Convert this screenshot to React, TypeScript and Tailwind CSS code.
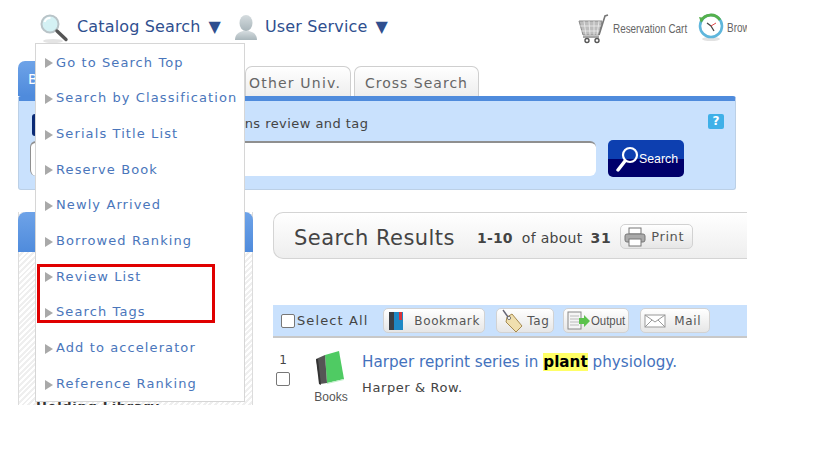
const FONT = "font-['DejaVu_Sans',sans-serif]";

function Lens({ size = 30 }: { size?: number }) {
  return (
    <svg width={size} height={size} viewBox="0 0 30 30" className="shrink-0">
      <ellipse cx="14" cy="28" rx="10" ry="2" fill="#e4e4e4" />
      <circle cx="11" cy="11" r="8.5" fill="#d4f1f4" stroke="#b9c4c8" strokeWidth="2" />
      <path d="M5.5 9a6 6 0 0 1 6-4" stroke="#fff" strokeWidth="2" fill="none" />
      <path d="M18 18l9 8.5" stroke="#555" strokeWidth="3.4" strokeLinecap="round" />
    </svg>
  );
}

function Person() {
  return (
    <svg width="24" height="26" viewBox="0 0 24 26" className="shrink-0 block">
      <defs>
        <linearGradient id="pg" x1="0" y1="0" x2="0" y2="1">
          <stop offset="0" stopColor="#d5dcdf" />
          <stop offset="1" stopColor="#a9b6bb" />
        </linearGradient>
      </defs>
      <ellipse cx="12" cy="8" rx="6.5" ry="8" fill="url(#pg)" />
      <path d="M1 25c0-6 4-8 8-9h6c4 1 8 3 8 9z" fill="url(#pg)" />
    </svg>
  );
}

function Cart() {
  return (
    <svg width="32" height="30" viewBox="0 0 32 30" className="shrink-0 block">
      <path d="M1 7h23l-3 14H5z" fill="#bdbdbd" stroke="#8a8a8a" />
      <path d="M6 7l2 14M11 7l1 14M16 7v14M21 7l-2 14M2 12h21M3 17h19" stroke="#eee" strokeWidth="0.8" />
      <path d="M21 21l6-19 3-1" stroke="#777" strokeWidth="1.6" fill="none" />
      <path d="M5 23h16" stroke="#888" strokeWidth="1.5" />
      <circle cx="9" cy="26.5" r="2" fill="#fff" stroke="#555" strokeWidth="1.4" />
      <circle cx="19" cy="26.5" r="2" fill="#fff" stroke="#555" strokeWidth="1.4" />
    </svg>
  );
}

function Clock() {
  return (
    <svg width="28" height="28" viewBox="0 0 28 28" className="shrink-0 block">
      <ellipse cx="14" cy="26" rx="9" ry="2" fill="#e2e2e2" />
      <circle cx="14" cy="13" r="11" fill="#fff" stroke="#5fb6dc" strokeWidth="2.6" />
      <path d="M4 8a11 11 0 0 1 19-1" stroke="#55b04c" strokeWidth="2.8" fill="none" />
      <path d="M2 4l5 1-3 5z" fill="#55b04c" />
      <path d="M14 13l-4-3M14 13l3 5" stroke="#444" strokeWidth="1.3" />
      <path d="M14 13l5-3" stroke="#d33" strokeWidth="0.9" />
    </svg>
  );
}

function Book({ w = 16, h = 20 }: { w?: number; h?: number }) {
  return (
    <svg width={w} height={h} viewBox="0 0 16 20" className="shrink-0">
      <rect x="1" y="1" width="5" height="18" fill="#3c3f44" />
      <rect x="6" y="1" width="9" height="18" fill="#1f88c4" />
      <rect x="11" y="1" width="3" height="8" fill="#d9333a" />
    </svg>
  );
}

function Btn({ children, className }: { children: React.ReactNode; className: string }) {
  return (
    <div className={`h-[25px] shrink-0 flex items-center rounded-[5px] border border-[#d2d2d2] bg-gradient-to-b from-white to-[#e6e6e6] text-[#555] text-[13px] tracking-[0.6px] ${className}`}>
      {children}
    </div>
  );
}

const menu = [
  "Go to Search Top",
  "Search by Classification",
  "Serials Title List",
  "Reserve Book",
  "Newly Arrived",
  "Borrowed Ranking",
  "Review List",
  "Search Tags",
  "Add to accelerator",
  "Reference Ranking",
];

export default function App() {
  return (
    <div className={`w-[819px] h-[460px] bg-white overflow-hidden ${FONT}`}>
      <div className="relative w-[747px] h-[405px] overflow-hidden">
        {/* Header */}
        <div className="h-[61px] w-[1000px] flex pl-[39px] pt-[13px]">
          <Lens />
          <span className="ml-[8px] mt-[3px] h-[22px] w-[144px] shrink-0 flex justify-between text-[16px] leading-[22px] tracking-[0.15px] text-[#2f4f8f] whitespace-nowrap"><span>Catalog Search</span><span>▼</span></span>
          <span className="ml-[13px] mt-[2px] shrink-0"><Person /></span>
          <span className="ml-[7px] mt-[3px] h-[22px] w-[123px] shrink-0 flex justify-between text-[16px] leading-[22px] tracking-[0.15px] text-[#2f4f8f] whitespace-nowrap"><span>User Service</span><span>▼</span></span>
          <span className="ml-[190px] mt-[1px] shrink-0"><Cart /></span>
          <span className="ml-[3px] mt-[8px] h-[16px] w-[73px] shrink-0 font-['Liberation_Sans',sans-serif] text-[13px] leading-[16px] text-[#666] scale-x-[0.76] origin-left whitespace-nowrap">Reservation Cart</span>
          <span className="ml-[11px] shrink-0"><Clock /></span>
          <span className="ml-[2px] mt-[7px] h-[16px] shrink-0 font-['Liberation_Sans',sans-serif] text-[13px] leading-[16px] text-[#666] scale-x-[0.77] origin-left whitespace-nowrap">Browsing History</span>
        </div>

        {/* Search panel */}
        <div className="ml-[18px] w-[718px] h-[129px] relative">
          <div className="flex h-[35px] items-end">
            <div className="w-[120px] h-[35px] rounded-t-[7px] bg-gradient-to-b from-[#6ea3e8] to-[#4f8bdc] pl-[10px] pt-[8px] text-white text-[14px]">Book</div>
            <div className="ml-[107px] w-[106px] h-[30px] rounded-t-[7px] border border-b-0 border-[#cfcfcf] bg-gradient-to-b from-white to-[#eeeeee] text-center pr-[6px] text-[14px] leading-[33px] tracking-[1.2px] text-[#666]">Other Univ.</div>
            <div className="ml-[3px] w-[125px] h-[30px] rounded-t-[7px] border border-b-0 border-[#cfcfcf] bg-gradient-to-b from-white to-[#eeeeee] text-center text-[14px] leading-[33px] tracking-[1px] text-[#666]">Cross Search</div>
          </div>
          <div className="h-[94px] rounded-[3px] border-t-[5px] border-t-[#4f8bdc] border-x border-b border-x-[#bcd0e6] border-b-[#bcd0e6] bg-[#c9e1fd] relative">
            <div className="flex items-start pl-[13px] pt-[13px]">
              <div className="w-[20px] h-[22px] bg-[#0b2a75] rounded-[3px]" />
              <span className="ml-[148px] mt-[1px] text-[13px] leading-[18px] tracking-[0.45px] text-[#444]">Contains review and tag</span>
              <span className="ml-auto mr-[11px] w-[16px] h-[15px] rounded-[2px] bg-[#3fb0e8] text-white text-[12px] font-bold leading-[15px] text-center">?</span>
            </div>
            <div className="flex items-start pl-[11px] pt-[5px]">
              <div className="w-[566px] h-[35px] rounded-[6px] bg-white border-t-2 border-t-[#8f8f8f] border-l border-l-[#8f8f8f]" />
              <div className="ml-[12px] -mt-[1px] w-[76px] h-[37px] rounded-[5px] bg-gradient-to-b from-[#0d3fb0] from-50% to-[#00006b] to-50% flex items-center pl-[7px] text-white">
                <svg width="24" height="26" viewBox="0 0 24 26" className="shrink-0">
                  <circle cx="15" cy="9" r="7" fill="none" stroke="#fff" strokeWidth="2.2" />
                  <path d="M10 15l-7 9" stroke="#fff" strokeWidth="3.4" strokeLinecap="round" />
                </svg>
                <span className="font-['Liberation_Sans',sans-serif] text-[13px] scale-x-[0.95] origin-left whitespace-nowrap">Search</span>
              </div>
            </div>
          </div>
        </div>

        {/* Body */}
        <div className="flex mt-[22px] pl-[18px]">
          <div className="w-[235px] h-[193px] shrink-0 relative border-x border-[#dcdcdc] bg-[repeating-linear-gradient(135deg,#ffffff,#ffffff_2px,#efefef_2px,#efefef_4px)]">
            <div className="h-[40px] rounded-t-[8px] -mx-px bg-gradient-to-b from-[#6ea3e8] to-[#4f8bdc]" />
            <div className="absolute left-[17px] top-[187px] text-[13px] font-bold tracking-[0.7px] text-[#333] leading-[16px] whitespace-nowrap">Holding Library</div>
          </div>

          <div className="ml-[20px] flex-1 min-w-0">
            <div className="h-[47px] w-[480px] rounded-l-[10px] border border-r-0 border-[#d4d4d4] bg-gradient-to-b from-white to-[#eeeeee] flex items-center pl-[20px] pt-[6px] whitespace-nowrap">
              <span className="text-[21px] tracking-[0.45px] text-[#444]">Search Results</span>
              <span className="ml-[22px] text-[14px] font-bold text-[#444] tracking-[0.2px]">1-10</span>
              <span className="ml-[9px] text-[14px] text-[#444] tracking-[0.3px]">of about</span>
              <span className="ml-[8px] text-[14px] font-bold text-[#444] tracking-[0.6px]">31</span>
              <Btn className="ml-[9px] w-[73px] pl-[3px] gap-[5px] -mt-[4px]">
                <svg width="22" height="20" viewBox="0 0 22 20" className="shrink-0">
                  <rect x="5" y="1" width="12" height="6" fill="#fff" stroke="#777" />
                  <rect x="1" y="7" width="20" height="8" rx="2" fill="#aaa" stroke="#777" />
                  <rect x="5" y="12" width="12" height="7" fill="#fff" stroke="#777" />
                </svg>
                Print
              </Btn>
            </div>

            <div className="mt-[46px] h-[33px] w-[474px] bg-[#c9e1fd] border-b-2 border-b-[#c8c8c8] flex items-center pl-[8px] whitespace-nowrap">
              <span className="w-[14px] h-[14px] border border-[#777] rounded-[2px] bg-white shrink-0" />
              <span className="ml-[2px] text-[13px] tracking-[1.1px] text-[#444]">Select All</span>
              <Btn className="ml-[15px] w-[102px] pl-[4px]">
                <Book />
                <span className="ml-[10px] text-[12px]">Bookmark</span>
              </Btn>
              <Btn className="ml-[11px] w-[58px] pl-[3px]">
                <svg width="24" height="24" viewBox="0 0 24 24" className="shrink-0">
                  <path d="M7 8l5-3 10 12-6 6L6 13z" fill="#f0dfae" stroke="#a58a4f" />
                  <circle cx="9" cy="9" r="1.6" fill="#fff" stroke="#777" />
                  <path d="M8 8L3 1" stroke="#667" strokeWidth="1.4" />
                </svg>
                <span className="ml-[3px] text-[12px]">Tag</span>
              </Btn>
              <Btn className="ml-[9px] w-[66px] pl-[3px]">
                <svg width="24" height="20" viewBox="0 0 24 20" className="shrink-0">
                  <rect x="1" y="1" width="13" height="17" fill="#f5f5f5" stroke="#888" />
                  <path d="M3 5h9M3 8h9M3 11h9M3 14h9" stroke="#bbb" />
                  <path d="M12 7h5V4l6 6-6 6v-3h-5z" fill="#5cc24d" />
                </svg>
                <span className="font-['Liberation_Sans',sans-serif] text-[12px] tracking-normal scale-x-[0.95] origin-left">Output</span>
              </Btn>
              <Btn className="ml-[11px] w-[70px] pl-[3px]">
                <svg width="22" height="14" viewBox="0 0 22 14" className="shrink-0">
                  <rect x="1" y="1" width="20" height="12" fill="#fff" stroke="#999" />
                  <path d="M1 1l10 7 10-7M1 13l7-7M21 13l-7-7" stroke="#999" fill="none" />
                </svg>
                <span className="ml-[8px] text-[12px]">Mail</span>
              </Btn>
            </div>

            <div className="flex mt-[14px] whitespace-nowrap">
              <div className="w-[18px] ml-[1px] flex flex-col items-center shrink-0">
                <span className="text-[12px] leading-[16px] text-[#444]">1</span>
                <span className="mt-[4px] w-[14px] h-[14px] border border-[#777] rounded-[2px]" />
              </div>
              <div className="w-[46px] ml-[16px] flex flex-col items-center shrink-0 -mt-[1px]">
                <svg width="30" height="34" viewBox="0 0 30 34" className="shrink-0 -ml-[2px]">
                  <path d="M10 4L24 0l5 28-17 4z" fill="#4fcb63" />
                  <path d="M1 8l9-4 2 28-7 1z" fill="#555" />
                  <path d="M1 8l3 25 2 1L3 8z" fill="#333" />
                  <path d="M12 32l17-4v1l-17 4z" fill="#bfeec7" />
                </svg>
                <span className="font-['Liberation_Sans',sans-serif] text-[12px] leading-[14px] text-[#555] mt-[5px]">Books</span>
              </div>
              <div className="ml-[8px] -mt-[1px]">
                <div className="text-[15.2px] leading-[22px] text-[#4472bd]">
                  Harper reprint series in <span className="bg-[#ffff66] font-bold text-black">plant</span> physiology.
                </div>
                <div className="mt-[7px] text-[13px] leading-[16px] tracking-[0.6px] text-[#444]">Harper &amp; Row.</div>
              </div>
            </div>
          </div>
        </div>

        {/* Dropdown */}
        <div className="absolute left-[35px] top-[43px] w-[210px] h-[359px] bg-white border border-[#d6d6d6] pt-[0.5px]">
          {menu.map((m) => (
            <div key={m} className="h-[35.7px] flex items-center pl-[9px] whitespace-nowrap">
              <span className="w-0 h-0 border-y-[5px] border-y-transparent border-l-[8px] border-l-[#a9a9a9] mt-[2px]" />
              <span className="ml-[3px] text-[13px] tracking-[1.1px] text-[#4a76bb]">{m}</span>
            </div>
          ))}
        </div>

        {/* Highlight box */}
        <div className="absolute left-[37px] top-[264px] w-[178px] h-[59px] border-[3px] border-[#e00000]" />
      </div>
    </div>
  );
}
